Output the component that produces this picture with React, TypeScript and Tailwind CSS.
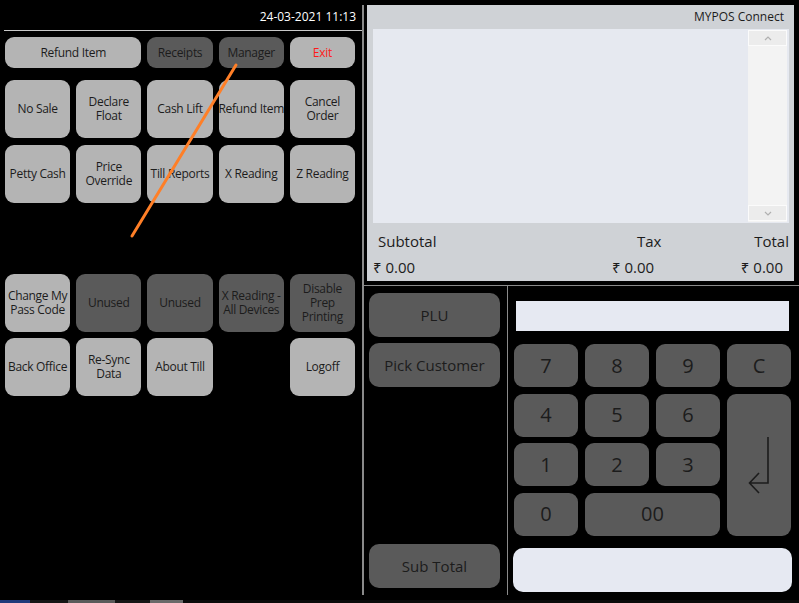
import React from "react";

type Btn = { label: string; dark?: boolean; red?: boolean } | null;

const LIGHT = "bg-[#b4b4b4]";
const DARK = "bg-[#5a5a5a]";

function MenuButton({ b }: { b: Btn }) {
  if (!b) return <div />;
  return (
    <div
      className={`${b.dark ? DARK : LIGHT} rounded-[9px] flex items-center justify-center text-center text-[12px] leading-[14px] tracking-[-0.3px] ${b.red ? "text-[#ff1a1a]" : "text-[#1c1c1c]"} whitespace-pre overflow-visible`}
    >
      {b.label}
    </div>
  );
}

const grid: Btn[] = [
  { label: "No Sale" },
  { label: "Declare\nFloat" },
  { label: "Cash Lift" },
  { label: "Refund Item" },
  { label: "Cancel\nOrder" },
  { label: "Petty Cash" },
  { label: "Price\nOverride" },
  { label: "Till Reports" },
  { label: "X Reading" },
  { label: "Z Reading" },
  null,
  null,
  null,
  null,
  null,
  { label: "Change My\nPass Code" },
  { label: "Unused", dark: true },
  { label: "Unused", dark: true },
  { label: "X Reading -\nAll Devices", dark: true },
  { label: "Disable\nPrep\nPrinting", dark: true },
  { label: "Back Office" },
  { label: "Re-Sync\nData" },
  { label: "About Till" },
  null,
  { label: "Logoff" },
];

function KeyBtn({ children, className = "" }: { children: React.ReactNode; className?: string }) {
  return (
    <div
      className={`bg-[#5a5a5a] rounded-[9px] flex items-center justify-center text-[20px] text-[#1c1c1c] ${className}`}
    >
      {children}
    </div>
  );
}

function SideBtn({ label }: { label: string }) {
  return (
    <div className="w-[131px] h-[44px] bg-[#5a5a5a] rounded-[10px] flex items-center justify-center text-[15px] text-[#1c1c1c]">
      {label}
    </div>
  );
}

export default function App() {
  return (
    <div
      className="w-[799px] h-[603px] bg-black relative overflow-hidden flex flex-col"
      style={{ fontFamily: '"Open Sans", "Noto Sans", "DejaVu Sans", sans-serif' }}
    >
      <div className="flex h-[600px]">
        {/* Left panel */}
        <div className="w-[362px] flex flex-col">
          <div className="ml-[4px] h-[31px] border-b border-[#c8c8c8] flex justify-end items-center pt-[4px] pr-[6px] text-white text-[12px]">
            24-03-2021 11:13
          </div>
          <div className="ml-[5px] w-[350px] mt-[6px] grid grid-cols-5 gap-x-[6px] h-[31px] text-[12px] tracking-[-0.3px]">
            <div className="col-span-2 bg-[#b4b4b4] rounded-[9px] flex items-center justify-center text-[#1c1c1c]">
              Refund Item
            </div>
            <div className="bg-[#5a5a5a] rounded-[9px] flex items-center justify-center text-[#1c1c1c]">
              Receipts
            </div>
            <div className="bg-[#5a5a5a] rounded-[9px] flex items-center justify-center text-[#1c1c1c]">
              Manager
            </div>
            <div className="bg-[#b4b4b4] rounded-[9px] flex items-center justify-center text-[#ff1a1a]">
              Exit
            </div>
          </div>
          <div className="ml-[5px] w-[350px] mt-[12px] grid grid-cols-5 gap-x-[6px] gap-y-[6.5px] auto-rows-[58px]">
            {grid.map((b, i) => (
              <MenuButton key={i} b={b} />
            ))}
          </div>
        </div>

        {/* Separator */}
        <div className="w-[2px] bg-[#8a8a8a] mt-[5px] mb-[5px]" />

        {/* Right panel */}
        <div className="flex-1 flex flex-col">
          <div className="ml-[3px] mt-[5px] w-[427px] h-[276px] bg-[#cfd2d6] flex flex-col">
            <div className="h-[24px] flex justify-end items-center pr-[10px] text-[12px] text-[#1c1c1c]">
              MYPOS Connect
            </div>
            <div className="ml-[6px] mr-[5px] h-[194px] bg-[#e6e9f0] flex justify-end">
              <div className="w-[39px] mr-[2px] mt-[1px] mb-[1px] bg-[#f3f3f3] flex flex-col justify-between">
                <div className="h-[16px] border border-[#fbfbfb] bg-[#ececec] flex items-center justify-center">
                  <svg width="8" height="5" viewBox="0 0 8 5">
                    <path d="M1 4 L4 1 L7 4" fill="none" stroke="#b0b0b0" strokeWidth="1.2" />
                  </svg>
                </div>
                <div className="h-[16px] border border-[#fbfbfb] bg-[#ececec] flex items-center justify-center mb-[1px]">
                  <svg width="8" height="5" viewBox="0 0 8 5">
                    <path d="M1 1 L4 4 L7 1" fill="none" stroke="#b0b0b0" strokeWidth="1.2" />
                  </svg>
                </div>
              </div>
            </div>
            <div className="ml-[6px] mr-[5px] mt-[8px] h-[20px] flex items-center text-[15px] text-[#1c1c1c]">
              <div className="w-[264px] pl-[5px]">Subtotal</div>
              <div className="flex-1">Tax</div>
              <div>Total</div>
            </div>
            <div className="ml-[6px] mr-[5px] mt-[6px] h-[20px] flex items-center text-[15px] text-[#1c1c1c]">
              <div className="w-[239px]">₹ 0.00</div>
              <div className="flex-1">₹ 0.00</div>
              <div className="pr-[6px]">₹ 0.00</div>
            </div>
          </div>

          <div className="mt-[4px] h-[1px] bg-[#8a8a8a]" />

          <div className="flex flex-1">
            <div className="w-[143px] flex flex-col pl-[5px] pt-[7px] pb-[12px] gap-[6px]">
              <SideBtn label="PLU" />
              <SideBtn label="Pick Customer" />
              <div className="mt-auto">
                <SideBtn label="Sub Total" />
              </div>
            </div>
            <div className="w-[1px] bg-[#8a8a8a] mb-[5px]" />
            <div className="flex-1 flex flex-col">
              <div className="ml-[8px] mt-[15px] w-[273px] h-[30px] bg-[#e6e9f2]" />
              <div className="ml-[6px] mt-[13px] w-[277px] grid grid-cols-4 gap-x-[7px] gap-y-[6.5px] auto-rows-[43px]">
                <KeyBtn>7</KeyBtn>
                <KeyBtn>8</KeyBtn>
                <KeyBtn>9</KeyBtn>
                <KeyBtn>C</KeyBtn>
                <KeyBtn>4</KeyBtn>
                <KeyBtn>5</KeyBtn>
                <KeyBtn>6</KeyBtn>
                <KeyBtn className="row-span-3">
                  <svg width="22" height="58" viewBox="0 0 22 58">
                    <path
                      d="M20 1 L20 47 L1.5 47 M11 37 L1.5 47 L11 57"
                      fill="none"
                      stroke="#1c1c1c"
                      strokeWidth="1.6"
                    />
                  </svg>
                </KeyBtn>
                <KeyBtn>1</KeyBtn>
                <KeyBtn>2</KeyBtn>
                <KeyBtn>3</KeyBtn>
                <KeyBtn>0</KeyBtn>
                <KeyBtn className="col-span-2">00</KeyBtn>
              </div>
              <div className="ml-[5px] mt-[12px] w-[279px] h-[44px] bg-[#e6e9f2] rounded-[10px]" />
            </div>
          </div>
        </div>
      </div>

      {/* taskbar sliver */}
      <div className="h-[3px] flex">
        <div className="w-[30px] bg-[#1f3a7a]" />
        <div className="w-[38px] bg-[#151515]" />
        <div className="w-[47px] bg-[#5a5a5a]" />
        <div className="w-[35px] bg-[#151515]" />
        <div className="w-[33px] bg-[#6a6a6a]" />
        <div className="flex-1 bg-[#0a0a0a]" />
      </div>

      <svg
        className="absolute left-0 top-0 pointer-events-none"
        width="799"
        height="603"
        viewBox="0 0 799 603"
      >
        <line x1="236" y1="65" x2="132" y2="236" stroke="#ff7f27" strokeWidth="3" strokeLinecap="round" />
      </svg>
    </div>
  );
}
